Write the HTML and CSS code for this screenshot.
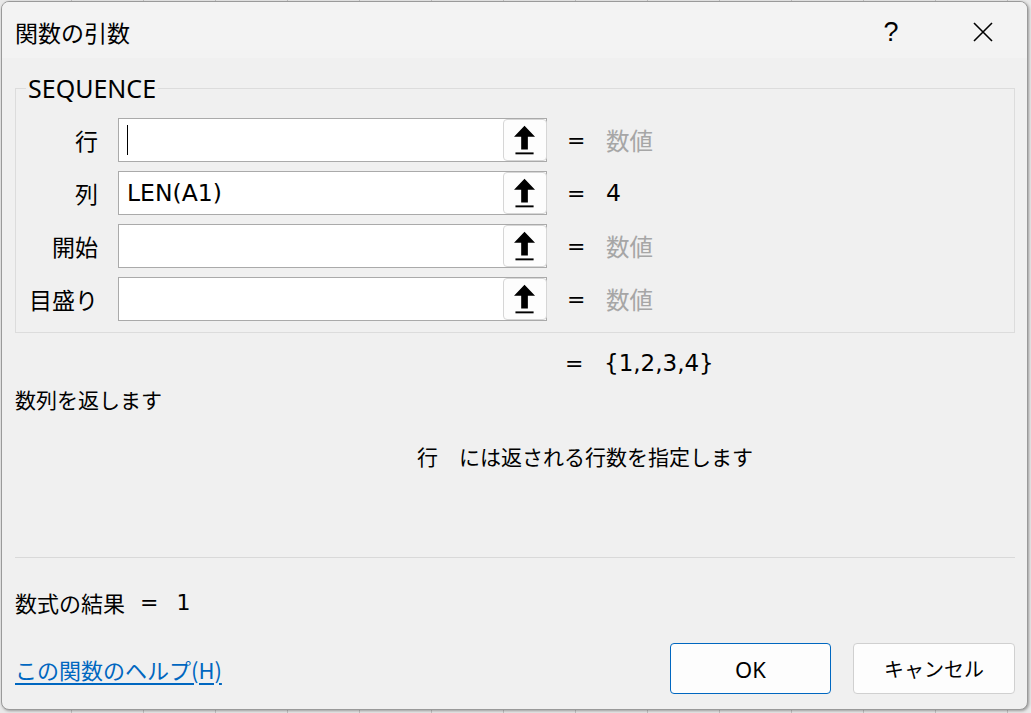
FILE: index.html
```html
<!DOCTYPE html>
<html lang="ja">
<head>
    <meta charset="UTF-8">
    <meta name="viewport" content="width=device-width, initial-scale=1.0">
    <title>関数の引数</title>
    <link rel="stylesheet" href="styles.css">
</head>
<body>
    <div class="dialog">
        <!-- Title bar -->
        <div class="titlebar">
            <span class="title">関数の引数</span>
            <span class="help-btn">?</span>
            <span class="close-btn">
                <svg width="20" height="20" viewBox="0 0 20 20">
                    <path d="M1 1 L19 19 M19 1 L1 19" stroke="#000" stroke-width="1.6" fill="none"/>
                </svg>
            </span>
        </div>

        <div class="content">
            <!-- Arguments -->
            <fieldset class="args">
                <legend>SEQUENCE</legend>

                <div class="arg-row">
                    <span class="arg-label">行</span>
                    <div class="field">
                        <span class="field-text"><span class="caret"></span></span>
                        <button class="ref-btn" type="button">
                            <svg width="44" height="42" viewBox="0 0 44 42">
                                <polygon points="21.5,6 32.5,17.5 25,17.5 25,31 18,31 18,17.5 10.5,17.5" fill="#000"/>
                                <rect x="12" y="34" width="19" height="2" fill="#000"/>
                            </svg>
                        </button>
                    </div>
                    <span class="eq">=</span>
                    <span class="val hint">数値</span>
                </div>

                <div class="arg-row">
                    <span class="arg-label">列</span>
                    <div class="field">
                        <span class="field-text">LEN(A1)</span>
                        <button class="ref-btn" type="button">
                            <svg width="44" height="42" viewBox="0 0 44 42">
                                <polygon points="21.5,6 32.5,17.5 25,17.5 25,31 18,31 18,17.5 10.5,17.5" fill="#000"/>
                                <rect x="12" y="34" width="19" height="2" fill="#000"/>
                            </svg>
                        </button>
                    </div>
                    <span class="eq">=</span>
                    <span class="val">4</span>
                </div>

                <div class="arg-row">
                    <span class="arg-label">開始</span>
                    <div class="field">
                        <span class="field-text"></span>
                        <button class="ref-btn" type="button">
                            <svg width="44" height="42" viewBox="0 0 44 42">
                                <polygon points="21.5,6 32.5,17.5 25,17.5 25,31 18,31 18,17.5 10.5,17.5" fill="#000"/>
                                <rect x="12" y="34" width="19" height="2" fill="#000"/>
                            </svg>
                        </button>
                    </div>
                    <span class="eq">=</span>
                    <span class="val hint">数値</span>
                </div>

                <div class="arg-row">
                    <span class="arg-label">目盛り</span>
                    <div class="field">
                        <span class="field-text"></span>
                        <button class="ref-btn" type="button">
                            <svg width="44" height="42" viewBox="0 0 44 42">
                                <polygon points="21.5,6 32.5,17.5 25,17.5 25,31 18,31 18,17.5 10.5,17.5" fill="#000"/>
                                <rect x="12" y="34" width="19" height="2" fill="#000"/>
                            </svg>
                        </button>
                    </div>
                    <span class="eq">=</span>
                    <span class="val hint">数値</span>
                </div>
            </fieldset>

            <div class="result-row">
                <span class="eq">=</span>
                <span class="val">{1,2,3,4}</span>
            </div>

            <!-- Descriptions -->
            <div class="desc-area">
                <p class="func-desc">数列を返します</p>
                <p class="arg-desc">行　には返される行数を指定します</p>
            </div>

            <hr class="sep">

            <div class="formula">
                <span>数式の結果</span>
                <span class="formula-eq">=</span>
                <span class="formula-val">1</span>
            </div>

            <div class="footer">
                <a href="#" class="help-link">この関数のヘルプ(H)</a>
                <button class="btn btn-ok" type="button">OK</button>
                <button class="btn" type="button">キャンセル</button>
            </div>
        </div>
    </div>
</body>
</html>
```

FILE: styles.css
```css
body {
    margin: 0;
    padding: 1px 0 0 1px;
    background-color: #e9e9e9;
    background-image: repeating-linear-gradient(90deg, transparent 0, transparent 71px, #c4c4c4 71px, #c4c4c4 72px);
    font-family: "Noto Sans", "Noto Sans CJK JP", sans-serif;
    color: #000;
    height: 713px;
    box-sizing: border-box;
    overflow: hidden;
}
.dialog {
    width: 1027px;
    height: 709px;
    box-sizing: border-box;
    background-color: #f0f0f0;
    border: 1px solid #9a9a9a;
    border-radius: 8px;
    box-shadow: 1px 1px 3px rgba(0, 0, 0, 0.35);
    overflow: hidden;
    display: flex;
    flex-direction: column;
}
.titlebar {
    height: 56px;
    padding-top: 4px;
    box-sizing: border-box;
    background-color: #f3f3f3;
    display: flex;
    align-items: center;
    flex-shrink: 0;
}
.title {
    font-family: "Noto Sans CJK JP", sans-serif;
    font-size: 23px;
    margin-left: 13px;
    flex: 1;
}
.help-btn {
    font-family: "Liberation Sans", sans-serif;
    font-size: 27px;
    width: 30px;
    text-align: center;
    margin-right: 62px;
}
.close-btn {
    display: flex;
    align-items: center;
    justify-content: center;
    width: 30px;
    margin-right: 29px;
}
.content {
    padding: 15px 12px 15px 13px;
    display: flex;
    flex-direction: column;
    flex: 1;
}
.args {
    margin: 0;
    padding: 15px 0 11px 0;
    border: 1px solid #dcdcdc;
    display: flex;
    flex-direction: column;
    gap: 9px;
}
.args legend {
    font-family: "Noto Sans", sans-serif;
    font-size: 25px;
    line-height: 30px;
    padding: 0 2px;
    margin-left: 10px;
}
.arg-row {
    display: flex;
    align-items: center;
    height: 44px;
}
.arg-label {
    font-family: "Noto Sans CJK JP", sans-serif;
    font-size: 23px;
    width: 82px;
    text-align: right;
    flex-shrink: 0;
}
.field {
    margin-left: 20px;
    width: 429px;
    height: 44px;
    box-sizing: border-box;
    border: 1px solid #aaaaaa;
    background-color: #fff;
    display: flex;
    align-items: center;
}
.field-text {
    flex: 1;
    padding-left: 8px;
    font-family: "DejaVu Sans", "Noto Sans CJK JP", sans-serif;
    font-size: 23.5px;
    display: flex;
    align-items: center;
}
.caret {
    display: inline-block;
    width: 1px;
    height: 30px;
    background-color: #000;
}
.ref-btn {
    width: 44px;
    height: 42px;
    padding: 0;
    margin: 0 -1px 0 0;
    border: 1px solid #d6d6d6;
    border-radius: 4px;
    background-color: #fdfdfd;
    display: flex;
    align-items: center;
    justify-content: center;
}
.ref-btn svg {
    display: block;
}
.eq {
    font-family: "DejaVu Sans", sans-serif;
    font-size: 22px;
    margin-left: 20px;
    width: 18px;
}
.val {
    font-family: "DejaVu Sans", "Noto Sans CJK JP", sans-serif;
    font-size: 23.5px;
    margin-left: 21px;
}
.hint {
    color: #a6a6a6;
}
.result-row {
    display: flex;
    align-items: center;
    height: 30px;
    margin-top: 15px;
    padding-left: 530px;
}
.result-row .val {
    font-size: 23px;
}
.desc-area {
    height: 179px;
}
.func-desc {
    font-family: "Noto Sans CJK JP", sans-serif;
    font-size: 21px;
    line-height: 30px;
    margin: 6px 0 0 0;
}
.arg-desc {
    font-family: "Noto Sans CJK JP", sans-serif;
    font-size: 21px;
    line-height: 30px;
    margin: 27px 0 0 402px;
}
.sep {
    margin: 0;
    border: none;
    border-top: 1px solid #d9d9d9;
}
.formula {
    display: flex;
    align-items: center;
    height: 30px;
    margin-top: 29px;
    font-family: "Noto Sans CJK JP", sans-serif;
    font-size: 22px;
}
.formula-eq {
    font-family: "DejaVu Sans", sans-serif;
    margin-left: 15px;
}
.formula-val {
    font-family: "DejaVu Sans", sans-serif;
    margin-left: 18px;
}
.footer {
    display: flex;
    align-items: center;
    margin-top: 26px;
}
.help-link {
    font-family: "Noto Sans CJK JP", sans-serif;
    font-size: 22px;
    color: #0067c0;
    text-decoration: underline;
    text-underline-offset: 4px;
    flex: 1;
}
.btn {
    width: 162px;
    height: 51px;
    margin-left: 22px;
    border: 1px solid #d0d0d0;
    border-radius: 4px;
    background-color: #fdfdfd;
    font-family: "Noto Sans CJK JP", sans-serif;
    font-size: 20px;
    color: #000;
}
.btn-ok {
    width: 161px;
    border-color: #0067c0;
    font-family: "Noto Sans", sans-serif;
    font-size: 22px;
}
```
